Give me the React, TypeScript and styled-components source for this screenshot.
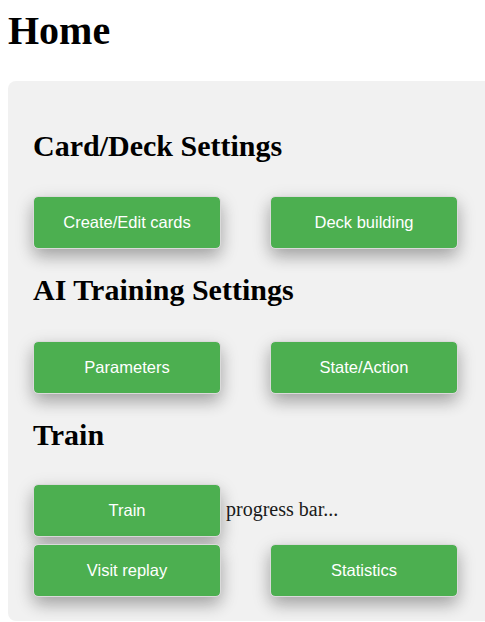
import React from "react";
import styled, { createGlobalStyle } from "styled-components";

const GlobalStyle = createGlobalStyle`
  html {
    overflow: hidden;
  }
  body {
    margin: 8px 0 0 8px;
    background: #ffffff;
    font-family: "Liberation Serif", "Times New Roman", serif;
    color: #000;
  }
`;

const PageTitle = styled.h1`
  margin: 0 0 27px;
  font-family: "Liberation Serif", "Times New Roman", serif;
  font-size: 40px;
  line-height: 46px;
  font-weight: bold;
`;

const Panel = styled.div`
  box-sizing: border-box;
  width: 100%;
  background: #f1f1f1;
  border-radius: 8px 0 0 8px;
  padding: 47.6px 0 25px 25px;
  display: flex;
  flex-direction: column;
`;

const SectionTitle = styled.h2<{ $first?: boolean }>`
  margin: ${(p) => (p.$first ? "0" : "25px")} 0 0;
  font-family: "Liberation Serif", "Times New Roman", serif;
  font-size: 30px;
  line-height: 34px;
  font-weight: bold;
`;

const ButtonRow = styled.div<{ $gap?: number }>`
  margin-top: ${(p) => (p.$gap ?? 34.5)}px;
  margin-left: 1px;
  display: flex;
  align-items: center;
  gap: 51px;
`;

const ProgressRow = styled.div<{ $gap?: number }>`
  margin-top: ${(p) => (p.$gap ?? 34.5)}px;
  margin-left: 1px;
  display: flex;
  align-items: center;
  gap: 6px;
`;

const ActionButton = styled.button`
  box-sizing: border-box;
  width: 186px;
  height: 51px;
  background: #4caf50;
  border: none;
  outline: 1px solid #dadada;
  border-radius: 4px;
  color: #ffffff;
  font-family: "Liberation Sans", Arial, sans-serif;
  font-size: 16.5px;
  text-align: center;
  padding: 0;
  cursor: pointer;
  box-shadow: 0 8px 16px 0 rgba(0, 0, 0, 0.2), 0 6px 20px 0 rgba(0, 0, 0, 0.19);
`;

const ProgressText = styled.span`
  font-family: "Liberation Serif", "Times New Roman", serif;
  font-size: 20px;
  color: #1a1a1a;
  margin-top: -2px;
`;

export default function App() {
  return (
    <>
      <GlobalStyle />
      <PageTitle>Home</PageTitle>
      <Panel>
        <SectionTitle $first>Card/Deck Settings</SectionTitle>
        <ButtonRow>
          <ActionButton>Create/Edit cards</ActionButton>
          <ActionButton>Deck building</ActionButton>
        </ButtonRow>
        <SectionTitle>AI Training Settings</SectionTitle>
        <ButtonRow>
          <ActionButton>Parameters</ActionButton>
          <ActionButton>State/Action</ActionButton>
        </ButtonRow>
        <SectionTitle>Train</SectionTitle>
        <ProgressRow $gap={33}>
          <ActionButton>Train</ActionButton>
          <ProgressText>progress bar...</ProgressText>
        </ProgressRow>
        <ButtonRow $gap={9.5}>
          <ActionButton>Visit replay</ActionButton>
          <ActionButton>Statistics</ActionButton>
        </ButtonRow>
      </Panel>
    </>
  );
}
